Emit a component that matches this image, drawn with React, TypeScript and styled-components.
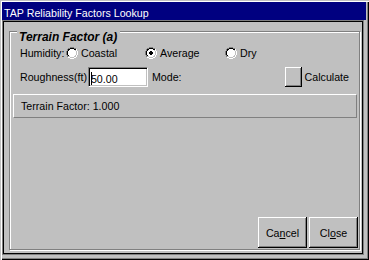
import React from "react";
import styled, { createGlobalStyle } from "styled-components";

const Global = createGlobalStyle`
  html, body { margin: 0; padding: 0; background: #c0c0c0; }
  * { box-sizing: border-box; }
  body { font-family: "Liberation Sans", Arial, sans-serif; font-size: 10.67px; color: #000; }
`;

const Window = styled.div`
  width: 369px;
  height: 260px;
  background: #c0c0c0;
  padding: 2px;
  display: flex;
  flex-direction: column;
  box-shadow: inset 1px 1px #c0c0c0, inset 2px 2px #fff, inset -1px -1px #000,
    inset -2px -2px #808080;
`;

const TitleBar = styled.div`
  height: 18px;
  margin-right: 1px;
  background: #000080;
  color: #fff;
  padding: 4px 0 0 2px;
  line-height: 14px;
  font-size: 10.67px;
  white-space: nowrap;
`;

const Client = styled.div`
  flex: 1;
  display: flex;
  flex-direction: column;
  border: 1px solid #808080;
  box-shadow: inset 1px 1px #000, inset -1px -1px #000;
  margin: 0 3px 3px 0;
  padding: 10px 3px 4px 6px;
`;

const GroupBox = styled.div`
  position: relative;
  flex: 1;
  display: flex;
  flex-direction: column;
  border: 1px solid #808080;
  box-shadow: inset 1px 1px #fff, 1px 1px #fff;
  padding: 15px 1px 1px 3px;
`;

const Legend = styled.span`
  position: absolute;
  top: -1px;
  left: 7px;
  padding: 0 3px 0 2px;
  background: #c0c0c0;
  font-size: 12px;
  font-weight: bold;
  font-style: italic;
  line-height: 12px;
`;

const Row = styled.div<{ $h: number; $pl?: number }>`
  display: flex;
  align-items: center;
  height: ${(p) => p.$h}px;
  padding-left: ${(p) => p.$pl ?? 7}px;
  white-space: nowrap;
`;

const Label = styled.span<{ $w?: number }>`
  display: inline-block;
  ${(p) => (p.$w ? `width: ${p.$w}px;` : "")}
`;

const RadioOption = styled.label<{ $w: number }>`
  display: flex;
  align-items: center;
  gap: 3px;
  width: ${(p) => p.$w}px;
`;

const Radio = ({ checked }: { checked?: boolean }) => (
  <svg width="12" height="12" viewBox="0 0 12 12" shapeRendering="crispEdges">
    <path d="M4 0h4v1H4zM2 1h2v1H2zM8 1h2v1H8zM1 2h1v2H1zM0 4h1v4H0zM1 8h1v2H1z" fill="#808080" />
    <path d="M4 1h4v1H4zM2 2h2v1H2zM8 2h2v1H8zM2 3h1v1H2zM1 4h1v4H1zM2 8h1v1H2z" fill="#000" />
    <path d="M10 2h1v2h-1zM11 4h1v4h-1zM10 8h1v2h-1zM8 10h2v1H8zM2 10h2v1H2zM4 11h4v1H4z" fill="#fff" />
    <path d="M9 3h1v1H9zM10 4h1v4h-1zM9 8h1v1H9zM8 9h2v1H8zM2 9h2v1H2zM4 10h4v1H4z" fill="#c0c0c0" />
    <path d="M4 2h4v1H4zM3 3h6v1H3zM2 4h8v4H2zM3 8h6v1H3zM4 9h4v1H4z" fill="#fff" />
    {checked && <path d="M5 4h2v1H5zM4 5h4v2H4zM5 7h2v1H5z" fill="#000" />}
  </svg>
);

const Input = styled.div`
  position: relative;
  width: 60px;
  height: 20px;
  margin-left: 1px;
  background: #fff;
  border-style: solid;
  border-width: 1px;
  border-color: #808080 #fff #fff #808080;
  box-shadow: inset 1px 1px #000, inset -1px -1px #c0c0c0;
  padding: 4px 0 0 2px;
  line-height: 12px;
`;

const Caret = styled.span`
  display: inline-block;
  width: 1px;
  height: 13px;
  margin-right: -1px;
  background: #000;
  vertical-align: -2px;
`;

const SmallButton = styled.div`
  width: 17px;
  height: 20px;
  margin: 0 3px 0 auto;
  background: #c0c0c0;
  box-shadow: inset -1px -1px #000, inset 1px 1px #fff, inset -2px -2px #808080;
`;

const Panel = styled.div`
  height: 24px;
  margin-top: 7px;
  margin-right: 1px;
  padding-left: 7px;
  display: flex;
  align-items: center;
  border-style: solid;
  border-width: 1px;
  border-color: #fff #808080 #808080 #fff;
`;

const ButtonBar = styled.div`
  margin-top: auto;
  display: flex;
  justify-content: flex-end;
  gap: 2px;
`;

const Button = styled.button`
  width: 49px;
  height: 31px;
  padding: 0;
  background: #c0c0c0;
  border: none;
  font-family: "Liberation Sans", Arial, sans-serif;
  font-size: 10.67px;
  color: #000;
  box-shadow: inset -1px -1px #000, inset 1px 1px #fff, inset -2px -2px #808080;
  u { text-decoration: underline; }
`;

export default function App() {
  return (
    <>
      <Global />
      <Window>
        <TitleBar>TAP Reliability Factors Lookup</TitleBar>
        <Client>
          <GroupBox>
            <Legend>Terrain Factor (a)</Legend>
            <Row $h={12}>
              <Label $w={46}>Humidity:</Label>
              <RadioOption $w={79}>
                <Radio />
                Coastal
              </RadioOption>
              <RadioOption $w={80}>
                <Radio checked />
                Average
              </RadioOption>
              <RadioOption $w={60}>
                <Radio />
                Dry
              </RadioOption>
            </Row>
            <Row $h={20} style={{ marginTop: 8 }}>
              <Label>Roughness(ft)</Label>
              <Input>
                <Caret />
                50.00
              </Input>
              <Label style={{ marginLeft: 4 }}>Mode:</Label>
              <SmallButton />
              <Label style={{ marginRight: 9 }}>Calculate</Label>
            </Row>
            <Panel>Terrain Factor: 1.000</Panel>
            <ButtonBar>
              <Button>
                Ca<u>n</u>cel
              </Button>
              <Button>
                Cl<u>o</u>se
              </Button>
            </ButtonBar>
          </GroupBox>
        </Client>
      </Window>
    </>
  );
}
